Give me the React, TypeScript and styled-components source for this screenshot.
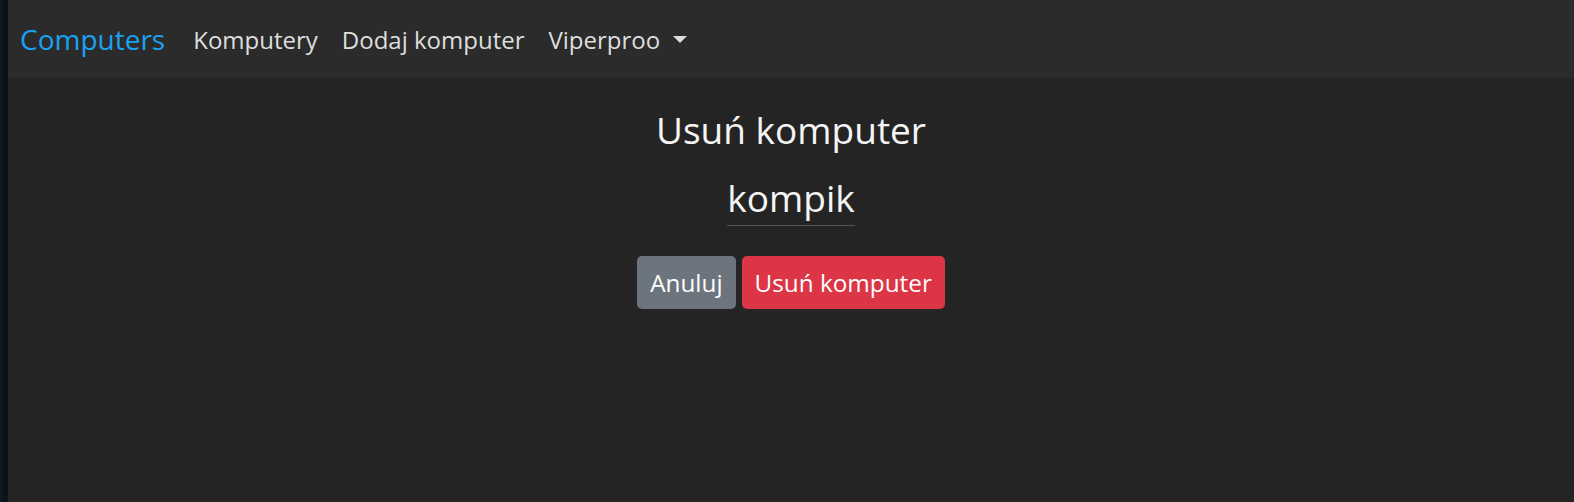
import React from 'react';
import styled, { createGlobalStyle } from 'styled-components';

const GlobalStyle = createGlobalStyle`
  html, body {
    margin: 0;
    padding: 0;
    background: #242424;
  }
  body {
    font-family: 'Open Sans', 'Noto Sans', sans-serif;
  }
`;

const Shell = styled.div`
  display: flex;
  height: 502px;
  overflow: hidden;
`;

const Edge = styled.div`
  width: 8px;
  flex-shrink: 0;
  background: #0b121a;
  border-left: 2px solid #131920;
  box-sizing: border-box;
`;

const Main = styled.div`
  flex: 1;
  display: flex;
  flex-direction: column;
  background: #242424;
`;

const Navbar = styled.nav`
  height: 78px;
  display: flex;
  align-items: center;
  padding: 0 12px;
  background: #2b2b2b;
`;

const Brand = styled.a`
  color: #1ba1f2;
  font-size: 28px;
  margin-right: 16px;
  text-decoration: none;
`;

const NavLink = styled.a`
  color: #dedede;
  font-size: 24px;
  padding: 0 12px;
  text-decoration: none;
  display: flex;
  align-items: center;
`;

const Caret = styled.span`
  display: inline-block;
  margin-left: 13px;
  border-top: 7px solid #dedede;
  border-left: 7px solid transparent;
  border-right: 7px solid transparent;
`;

const Content = styled.main`
  display: flex;
  flex-direction: column;
  align-items: center;
  color: #f4f4f4;
  padding-top: 30px;
`;

const Title = styled.h3`
  margin: 0;
  font-size: 37px;
  font-weight: 400;
  line-height: 1.2;
`;

const Name = styled.div`
  margin-top: 24px;
  font-size: 37px;
  line-height: 1.2;
  padding-bottom: 4px;
  border-bottom: 1px solid #555;
`;

const Actions = styled.div`
  display: flex;
  gap: 6px;
  margin-top: 30px;
`;

const Button = styled.button<{ $variant: 'secondary' | 'danger' }>`
  font-family: inherit;
  font-size: 24.3px;
  line-height: 33.6px;
  padding: 9px 12px;
  border: 1px solid transparent;
  border-radius: 5px;
  color: #fff;
  background: ${p => (p.$variant === 'danger' ? '#dc3545' : '#6c757d')};
  cursor: pointer;
`;

export default function App() {
  return (
    <>
      <GlobalStyle />
      <Shell>
        <Edge />
        <Main>
          <Navbar>
            <Brand href="#">Computers</Brand>
            <NavLink href="#">Komputery</NavLink>
            <NavLink href="#">Dodaj komputer</NavLink>
            <NavLink href="#">
              Viperproo
              <Caret />
            </NavLink>
          </Navbar>
          <Content>
            <Title>Usuń komputer</Title>
            <Name>kompik</Name>
            <Actions>
              <Button $variant="secondary">Anuluj</Button>
              <Button $variant="danger">Usuń komputer</Button>
            </Actions>
          </Content>
        </Main>
      </Shell>
    </>
  );
}
